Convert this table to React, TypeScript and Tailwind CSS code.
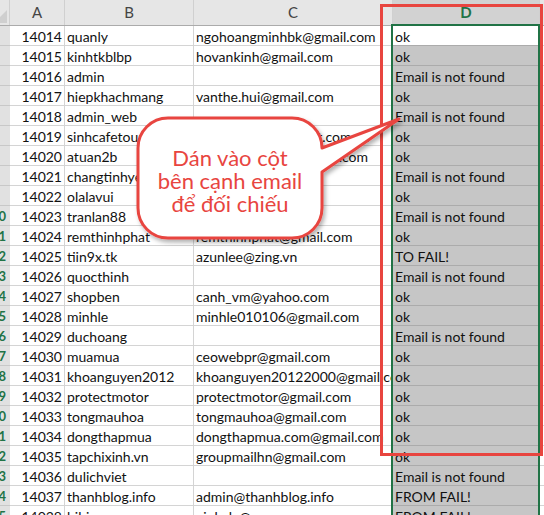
import React from 'react'

type Row = { id: number; user: string; email: string; result: string }

const rows: Row[] = [
  { id: 14014, user: 'quanly', email: 'ngohoangminhbk@gmail.com', result: 'ok' },
  { id: 14015, user: 'kinhtkblbp', email: 'hovankinh@gmail.com', result: 'ok' },
  { id: 14016, user: 'admin', email: '', result: 'Email is not found' },
  { id: 14017, user: 'hiepkhachmang', email: 'vanthe.hui@gmail.com', result: 'ok' },
  { id: 14018, user: 'admin_web', email: '', result: 'Email is not found' },
  { id: 14019, user: 'sinhcafetour', email: 'info@sinhcafetourist.com.vn', result: 'ok' },
  { id: 14020, user: 'atuan2b', email: 'tuananh2b1990@gmail.com', result: 'ok' },
  { id: 14021, user: 'changtinhyeu', email: '', result: 'Email is not found' },
  { id: 14022, user: 'olalavui', email: 'olalavui@gmail.com', result: 'ok' },
  { id: 14023, user: 'tranlan88', email: '', result: 'Email is not found' },
  { id: 14024, user: 'remthinhphat', email: 'remthinhphat@gmail.com', result: 'ok' },
  { id: 14025, user: 'tiin9x.tk', email: 'azunlee@zing.vn', result: 'TO FAIL!' },
  { id: 14026, user: 'quocthinh', email: '', result: 'Email is not found' },
  { id: 14027, user: 'shopben', email: 'canh_vm@yahoo.com', result: 'ok' },
  { id: 14028, user: 'minhle', email: 'minhle010106@gmail.com', result: 'ok' },
  { id: 14029, user: 'duchoang', email: '', result: 'Email is not found' },
  { id: 14030, user: 'muamua', email: 'ceowebpr@gmail.com', result: 'ok' },
  { id: 14031, user: 'khoanguyen2012', email: 'khoanguyen20122000@gmail.com', result: 'ok' },
  { id: 14032, user: 'protectmotor', email: 'protectmotor@gmail.com', result: 'ok' },
  { id: 14033, user: 'tongmauhoa', email: 'tongmauhoa@gmail.com', result: 'ok' },
  { id: 14034, user: 'dongthapmua', email: 'dongthapmua.com@gmail.com', result: 'ok' },
  { id: 14035, user: 'tapchixinh.vn', email: 'groupmailhn@gmail.com', result: 'ok' },
  { id: 14036, user: 'dulichviet', email: '', result: 'Email is not found' },
  { id: 14037, user: 'thanhblog.info', email: 'admin@thanhblog.info', result: 'FROM FAIL!' },
  { id: 14038, user: 'bibicare', email: 'vinh_le@msn.com', result: 'FROM FAIL!' },
]

export default function App() {
  return (
    <div className="relative w-[544px] h-[515px] overflow-hidden bg-white font-['Lato','Liberation_Sans',sans-serif] text-[14px] text-[#111]">
      {/* column headers */}
      <div className="flex h-[26px] bg-[#e6e6e6] border-b border-[#ababab] text-[15px] text-[#444]">
        <div className="relative w-[10px] border-r border-[#d0d0d0] overflow-hidden">
          <div className="absolute left-[-6px] bottom-[2px] w-0 h-0 border-b-[13px] border-l-[13px] border-b-[#cfcfcf] border-l-transparent" />
        </div>
        <div className="w-[55px] border-r border-[#d0d0d0] flex items-center justify-center">A</div>
        <div className="w-[129px] border-r border-[#d0d0d0] flex items-center justify-center">B</div>
        <div className="w-[199px] border-r border-[#d0d0d0] flex items-center justify-center">C</div>
        <div className="w-[146px] bg-[#d2d2d2] flex items-center justify-center font-bold text-[#217346]">D</div>
        <div className="flex-1 border-l border-[#d0d0d0]" />
      </div>

      {rows.map((r, i) => (
        <div key={r.id} className="flex h-[20px] leading-[21px]">
          <div className="w-[10px] bg-[#e1e1e1] border-b border-[#c8c8c8] overflow-hidden flex justify-end pr-[4px] text-[13px] font-bold text-[#217346]">
            {i >= 9 ? String((r.id - 14023) % 10) : ''}
          </div>
          <div className="w-[55px] border-r border-b border-[#d4d4d4] text-right pr-[2px] whitespace-nowrap overflow-hidden">
            {r.id}
          </div>
          <div className="w-[129px] border-r border-b border-[#d4d4d4] pl-[2px] whitespace-nowrap overflow-hidden">
            {r.user}
          </div>
          <div className="w-[199px] border-r border-b border-[#d4d4d4] pl-[2px] whitespace-nowrap overflow-hidden">
            {r.email}
          </div>
          <div
            className={
              i === 0
                ? 'w-[146px] border-b border-[#ababab] bg-white pl-[2px] whitespace-nowrap overflow-hidden'
                : 'w-[146px] border-b border-[#ababab] bg-[#c6c6c6] pl-[2px] whitespace-nowrap overflow-hidden'
            }
          >
            {r.result}
          </div>
          <div className="flex-1 border-b border-[#d4d4d4]" />
        </div>
      ))}

      {/* selection outline on column D */}
      <div className="absolute left-[391px] top-[24px] w-[149px] h-[520px] border-2 border-[#217346] pointer-events-none" />

      {/* red highlight frame */}
      <div className="absolute left-[380px] top-[4px] w-[163px] h-[452px] border-[3px] border-[#e8453f] pointer-events-none" />

      {/* callout */}
      <svg className="absolute left-0 top-0 pointer-events-none" width="544" height="515" viewBox="0 0 544 515">
        <defs>
          <filter id="sh" x="-20%" y="-20%" width="140%" height="140%">
            <feDropShadow dx="2" dy="3" stdDeviation="2" floodColor="#000" floodOpacity="0.3" />
          </filter>
        </defs>
        <path
          d="M168,118 H292 A30,30 0 0 1 322,148 L399,119 L322,172 V208 A30,30 0 0 1 292,238 H168 A30,30 0 0 1 138,208 V148 A30,30 0 0 1 168,118 Z"
          fill="#fff"
          stroke="#e8453f"
          strokeWidth="3"
          strokeLinejoin="round"
          filter="url(#sh)"
        />
      </svg>
      <div className="absolute left-[138px] top-[120px] w-[184px] h-[120px] flex flex-col items-center justify-center text-[22px] leading-[23px] text-[#e8453f] pointer-events-none">
        <div>Dán vào cột</div>
        <div>bên cạnh email</div>
        <div>để đối chiếu</div>
      </div>
    </div>
  )
}
